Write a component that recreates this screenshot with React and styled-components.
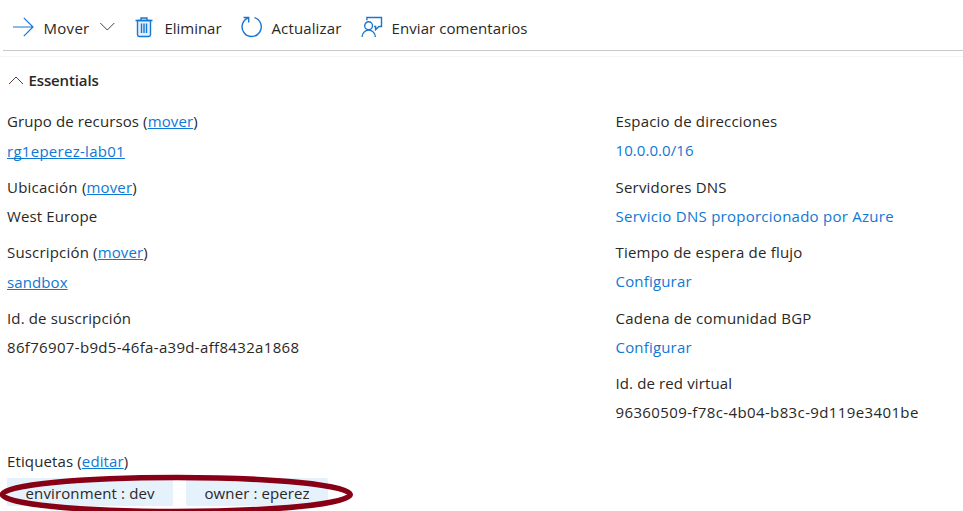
import React from "react";
import styled, { createGlobalStyle } from "styled-components";

const Global = createGlobalStyle`
  *, *::before, *::after { box-sizing: border-box; }
  html, body { margin: 0; background: #fff; overflow: hidden; }
`;

const Page = styled.main`
  position: relative;
  display: flex;
  flex-direction: column;
  width: 963px;
  height: 511px;
  overflow: hidden;
  background: #fff;
  color: #292827;
  font-family: "Open Sans", "Noto Sans", sans-serif;
  font-size: 15px;
`;

const Toolbar = styled.header`
  display: flex;
  height: 51px;
  margin-left: 3px;
  padding: 4px 0 0 9px;
  border-bottom: 1px solid #c8c8c8;
`;

const Command = styled.button`
  display: flex;
  align-items: center;
  flex: none;
  width: ${(p) => p.$width}px;
  height: 46px;
  padding: 0;
  border: 0;
  background: none;
  color: inherit;
  font: inherit;
  text-align: left;
`;

const CommandIcon = styled.svg`
  flex: none;
  width: 22px;
  height: 22px;
  margin-right: ${(p) => p.$gap}px;
  fill: none;
  stroke: #1976d2;
  stroke-width: 1.4;
`;

const Chevron = styled.svg`
  flex: none;
  width: 16px;
  height: 10px;
  fill: none;
  stroke: ${(p) => p.$color};
  stroke-width: 1;
`;

const Text = styled.span`
  letter-spacing: ${(p) => p.$track || 0}px;
  white-space: pre;
`;

const CommandText = styled(Text)`
  margin-right: 9px;
  padding-top: 2px;
`;

const Link = styled.a`
  color: #0f78d4;
  letter-spacing: ${(p) => p.$track || 0}px;
  white-space: pre;
  text-decoration: ${(p) => (p.$underlined ? "underline" : "none")};
  text-decoration-thickness: 1px;
  text-underline-offset: 1px;
  text-decoration-skip-ink: none;
`;

const SectionHeader = styled.div`
  display: flex;
  align-items: center;
  height: 48px;
  margin-top: 5px;
  padding: 0 0 1px 7.5px;
  gap: 5px;
  border-top: 1px solid #f5f5f5;
`;

const SectionTitle = styled.h2`
  margin: 0;
  padding-bottom: 1px;
  font-size: 15px;
  font-weight: 600;
  letter-spacing: -0.13px;
`;

const Columns = styled.div`
  display: grid;
  grid-template-columns: 608.5px 1fr;
  height: 340px;
  margin-top: 3px;
  padding-left: 7px;
`;

const Column = styled.dl`
  display: flex;
  flex-direction: column;
  margin: 0;
`;

const Property = styled.div`
  height: 65.5px;
`;

const Label = styled.dt`
  height: 29px;
  line-height: 29px;
`;

const Value = styled.dd`
  height: 29px;
  margin: 0;
  padding-top: ${(p) => (p.$lowered ? 1 : 0)}px;
  line-height: 29px;
`;

const TagLabel = styled.div`
  height: 31px;
  padding-left: 7px;
  line-height: 29px;
`;

const TagList = styled.div`
  display: flex;
  gap: 13px;
  padding-left: 7px;
`;

const Tag = styled.span`
  display: flex;
  align-items: center;
  width: ${(p) => p.$width}px;
  height: 28px;
  padding: 2px 0 0 18.5px;
  border-radius: 2px;
  background: #e5f1fb;
`;

const Highlight = styled.svg`
  position: absolute;
  left: 0;
  top: 470px;
  width: 360px;
  height: 41px;
  fill: none;
  stroke: #880015;
  stroke-width: 5.6;
`;

const ArrowDrawing = () => (
  <path d="M1 11H21M11.8 1.8L21 11L11.8 20.2" strokeWidth="1.2" />
);

const TrashDrawing = () => (
  <>
    <path
      d="M3.5 4.5H16.5V18.8Q16.5 20.5 14.8 20.5H5.2Q3.5 20.5 3.5 18.8Z"
      fill="#dff1fc"
    />
    <path d="M1.5 4.5H18.5M7 4V2H13V4" />
    <path d="M7.5 7.5V17M10 7.5V17M12.5 7.5V17" />
  </>
);

const RefreshDrawing = () => (
  <>
    <path d="M13.5 1.7A9.6 9.6 0 1 1 7 2" />
    <path d="M2.6 1.5H7.7V6.5" />
  </>
);

const FeedbackDrawing = () => (
  <>
    <path d="M5.9 4.2V1.5H20.5V10.5H18L14.6 13.6V10.5H13" />
    <circle cx="7.6" cy="9.7" r="3.9" />
    <path d="M1.1 21A6.6 6.9 0 0 1 14.3 21" />
  </>
);

const commands = [
  { label: "Mover", Drawing: ArrowDrawing, width: 122, gap: 9.5, track: 0.29, menu: true },
  { label: "Eliminar", Drawing: TrashDrawing, width: 107, gap: 8.5, track: -0.03 },
  { label: "Actualizar", Drawing: RefreshDrawing, width: 120, gap: 8.5, track: 0.13 },
  { label: "Enviar comentarios", Drawing: FeedbackDrawing, width: 180, gap: 8.5, track: 0.08 },
];

const left = [
  { label: "Grupo de recursos (", track: 0.11, move: true, value: "rg1eperez-lab01", valueTrack: 0.28, link: true },
  { label: "Ubicación (", track: 0.24, move: true, value: "West Europe", valueTrack: 0.12 },
  { label: "Suscripción (", track: 0.18, move: true, value: "sandbox", valueTrack: 0.1, link: true },
  { label: "Id. de suscripción", track: 0.14, value: "86f76907-b9d5-46fa-a39d-aff8432a1868", valueTrack: 0.33 },
];

const right = [
  { label: "Espacio de direcciones", track: 0.18, value: "10.0.0.0/16", valueTrack: 0.06, link: true },
  { label: "Servidores DNS", track: 0.21, value: "Servicio DNS proporcionado por Azure", valueTrack: 0.26, link: true },
  { label: "Tiempo de espera de flujo", track: 0.21, value: "Configurar", valueTrack: 0.18, link: true },
  { label: "Cadena de comunidad BGP", track: 0.23, value: "Configurar", valueTrack: 0.18, link: true },
  { label: "Id. de red virtual", track: 0.12, value: "96360509-f78c-4b04-b83c-9d119e3401be", valueTrack: 0.38 },
];

const tags = [
  { text: "environment : dev", width: 166, track: 0.13 },
  { text: "owner : eperez", width: 142, track: 0.1 },
];

const PropertyColumn = ({ items, underlined }) => (
  <Column>
    {items.map((item) => (
      <Property key={item.label}>
        <Label>
          <Text $track={item.track}>{item.label}</Text>
          {item.move && (
            <>
              <Link $underlined $track={0.12}>mover</Link>)
            </>
          )}
        </Label>
        <Value $lowered={underlined && item.link}>
          {item.link ? (
            <Link $underlined={underlined} $track={item.valueTrack}>{item.value}</Link>
          ) : (
            <Text $track={item.valueTrack}>{item.value}</Text>
          )}
        </Value>
      </Property>
    ))}
  </Column>
);

export default function App() {
  return (
    <>
      <Global />
      <Page>
        <Toolbar>
          {commands.map(({ label, Drawing, width, gap, track, menu }) => (
            <Command key={label} $width={width}>
              <CommandIcon viewBox="0 0 22 22" $gap={gap}>
                <Drawing />
              </CommandIcon>
              <CommandText $track={track}>{label}</CommandText>
              {menu && (
                <Chevron viewBox="0 0 16 10" $color="#444">
                  <path d="M1.3 1L8.3 8L15.3 1" />
                </Chevron>
              )}
            </Command>
          ))}
        </Toolbar>
        <SectionHeader>
          <Chevron viewBox="0 0 16 10" $color="#5c4436">
            <path d="M1 9L8 2L15 9" />
          </Chevron>
          <SectionTitle>Essentials</SectionTitle>
        </SectionHeader>
        <Columns>
          <PropertyColumn items={left} underlined />
          <PropertyColumn items={right} />
        </Columns>
        <TagLabel>
          <Text $track={0.13}>Etiquetas (</Text>
          <Link $underlined $track={0.1}>editar</Link>)
        </TagLabel>
        <TagList>
          {tags.map((tag) => (
            <Tag key={tag.text} $width={tag.width}>
              <Text $track={tag.track}>{tag.text}</Text>
            </Tag>
          ))}
        </TagList>
        <Highlight viewBox="0 0 360 41">
          <ellipse cx="176.3" cy="24.5" rx="174" ry="17" />
        </Highlight>
      </Page>
    </>
  );
}
